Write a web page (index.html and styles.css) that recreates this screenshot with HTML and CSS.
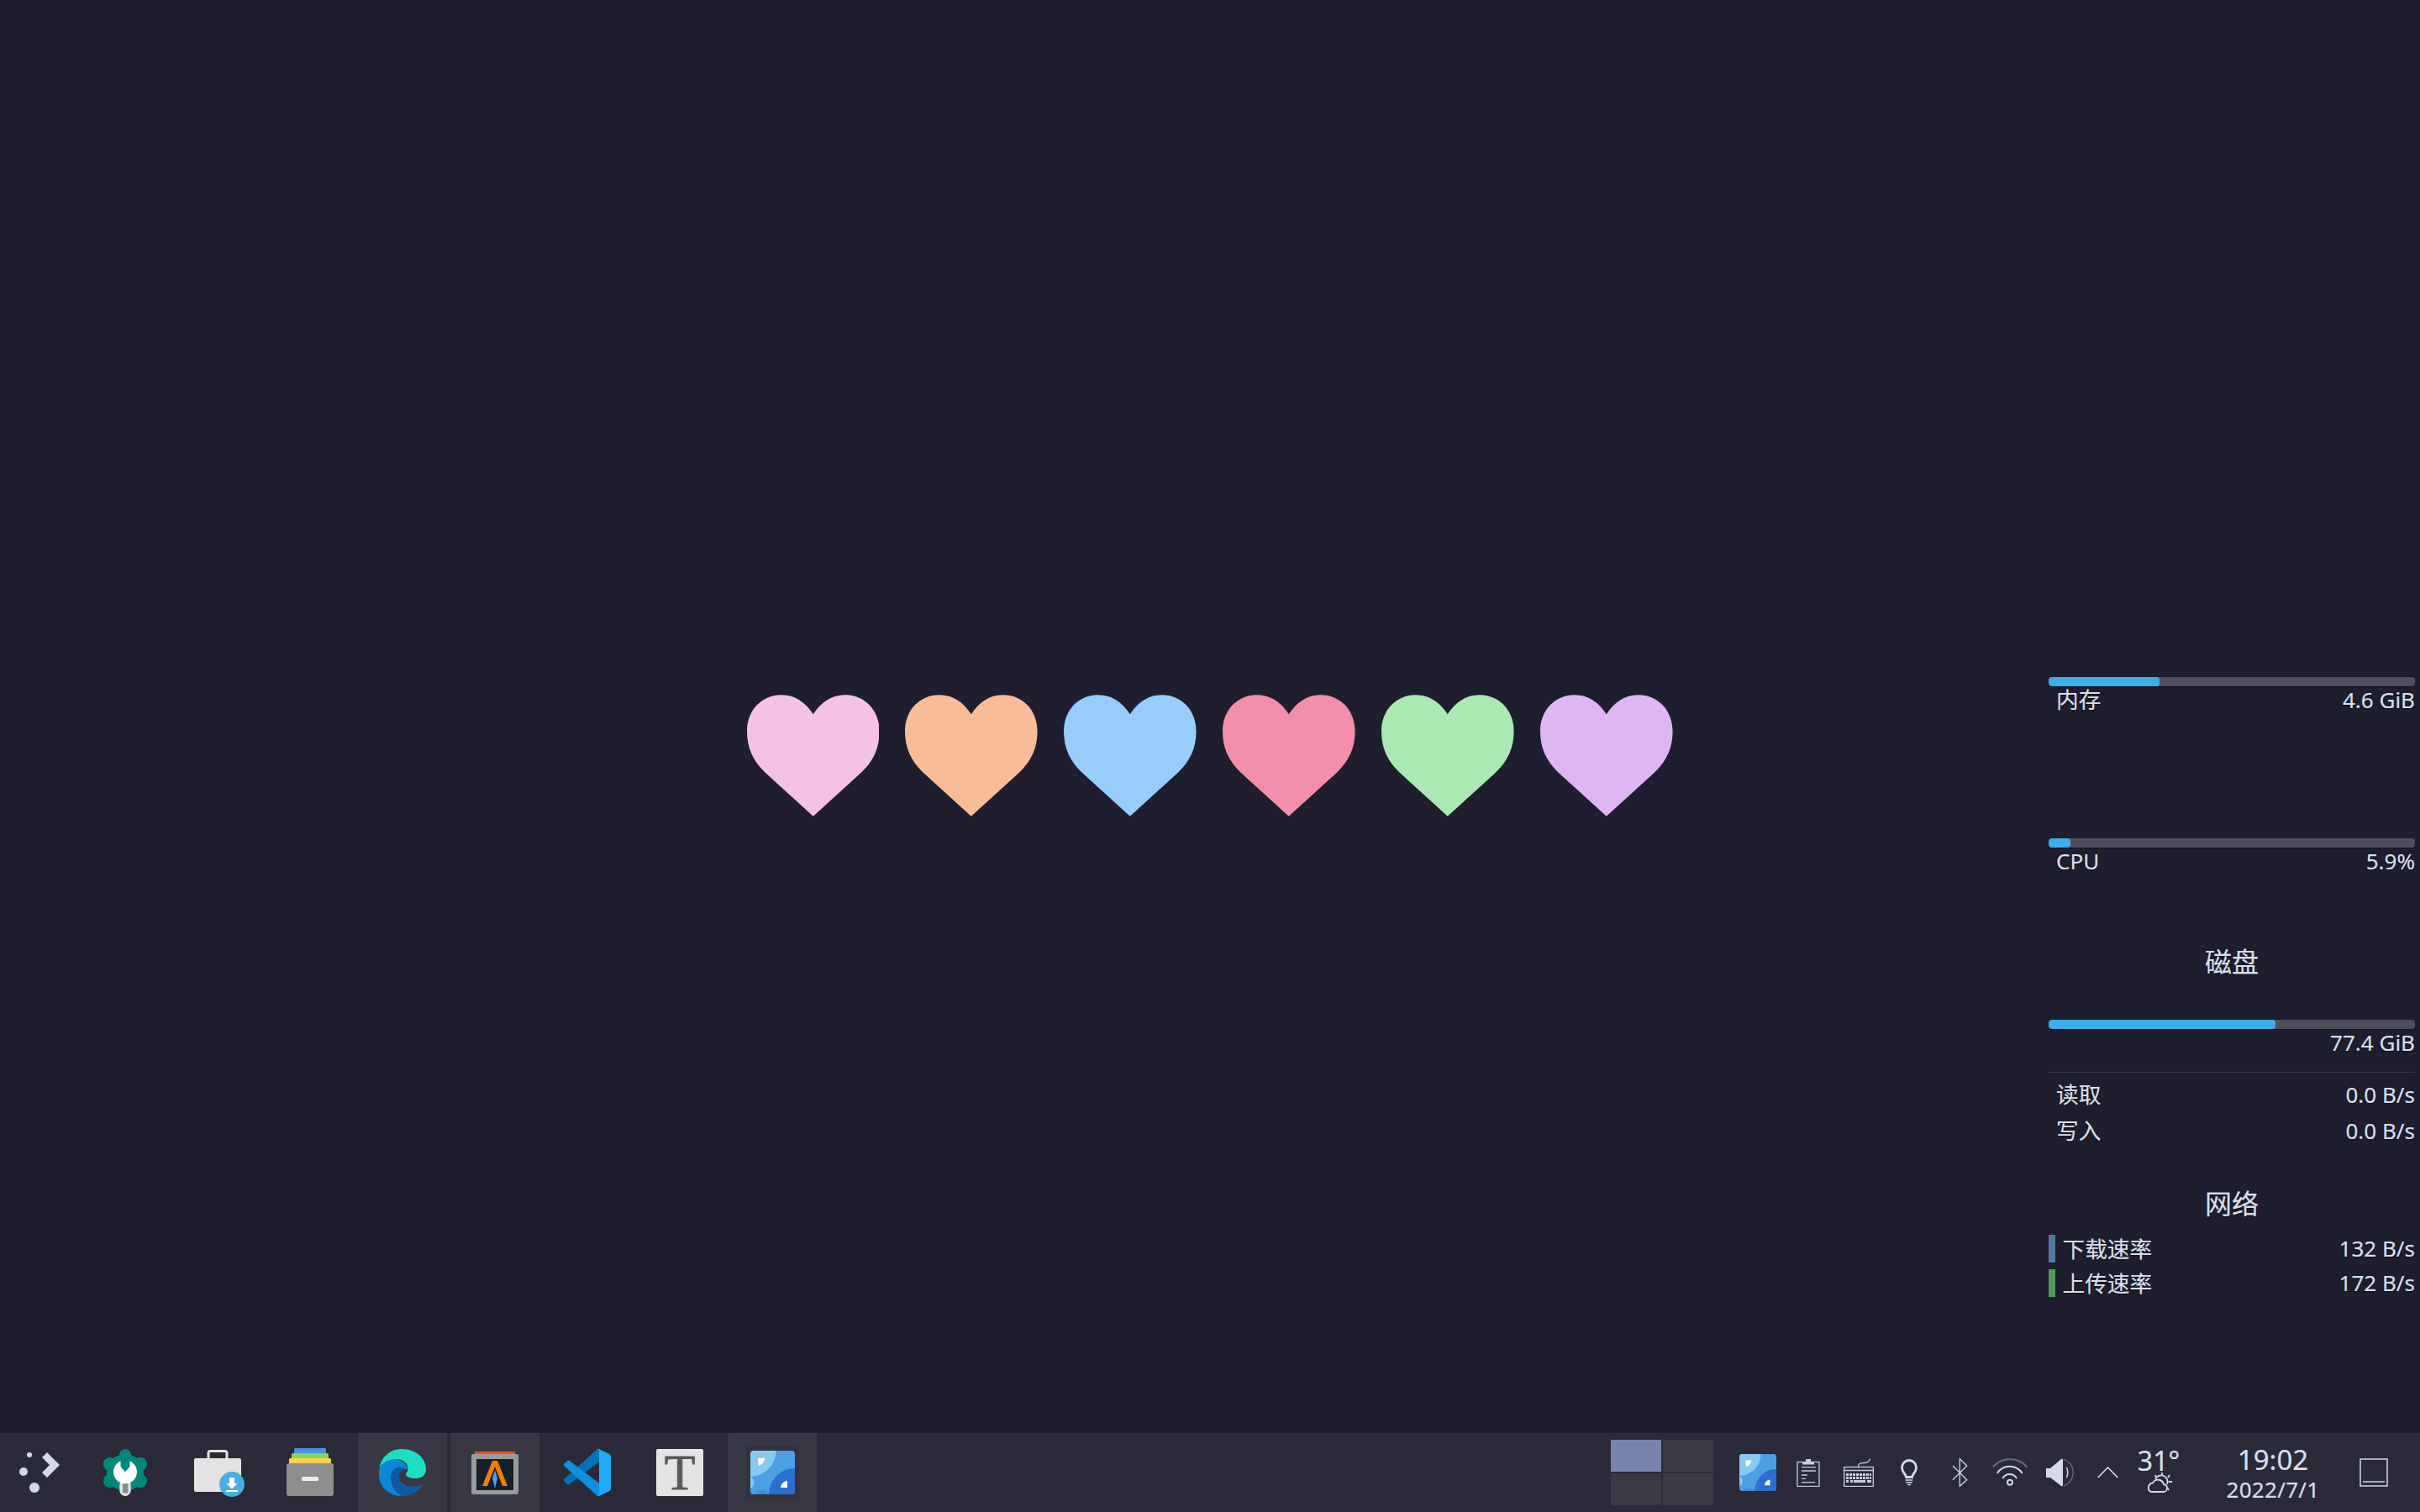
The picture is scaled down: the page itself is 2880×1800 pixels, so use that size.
FILE: index.html
```html
<!DOCTYPE html>
<html lang="zh-CN">
<head>
<meta charset="utf-8">
<title>Desktop</title>
<link rel="stylesheet" href="styles.css">
</head>
<body>
<div class="screen">
  <main class="desktop">
    <section class="hearts">
      <svg class="heart heart-pink" viewBox="0 0 158 145"><use href="#heart-shape"/></svg>
      <svg class="heart heart-peach" viewBox="0 0 158 145"><use href="#heart-shape"/></svg>
      <svg class="heart heart-blue" viewBox="0 0 158 145"><use href="#heart-shape"/></svg>
      <svg class="heart heart-red" viewBox="0 0 158 145"><use href="#heart-shape"/></svg>
      <svg class="heart heart-green" viewBox="0 0 158 145"><use href="#heart-shape"/></svg>
      <svg class="heart heart-mauve" viewBox="0 0 158 145"><use href="#heart-shape"/></svg>
    </section>
    <aside class="monitor">
      <div class="bar"><div class="fill" style="width:30.3%"></div></div>
      <div class="row"><span>内存</span><span class="val">4.6 GiB</span></div>
      <div class="bar bar-cpu"><div class="fill" style="width:6%"></div></div>
      <div class="row"><span class="val">CPU</span><span class="val">5.9%</span></div>
      <h2 class="heading heading-disk">磁盘</h2>
      <div class="bar bar-disk"><div class="fill" style="width:62%"></div></div>
      <div class="row"><span></span><span class="val">77.4 GiB</span></div>
      <div class="divider"></div>
      <div class="row row-read"><span>读取</span><span class="val">0.0 B/s</span></div>
      <div class="row row-write"><span>写入</span><span class="val">0.0 B/s</span></div>
      <h2 class="heading heading-net">网络</h2>
      <div class="net-row net-down"><i class="swatch swatch-down"></i><span class="net-label">下载速率</span><span class="val">132 B/s</span></div>
      <div class="net-row net-up"><i class="swatch swatch-up"></i><span class="net-label">上传速率</span><span class="val">172 B/s</span></div>
    </aside>
  </main>
  <footer class="panel">
    <div class="launcher">
      <svg class="ico-start" viewBox="0 0 48 48"><g fill="#d6dae4"><circle cx="12" cy="3" r="3"/><circle cx="5" cy="23" r="5"/><circle cx="18" cy="42" r="6"/><path d="M33 0 48 15 33 30 27 24 36 15 27 6Z"/></g></svg>
    </div>
    <nav class="tasks">
      <div class="task"><svg class="ico" viewBox="0 0 56 56"><g fill="#00897b"><circle cx="28" cy="28" r="22"/><circle cx="28" cy="7" r="7"/><circle cx="10" cy="18" r="8"/><circle cx="46" cy="18" r="8"/><circle cx="10" cy="38" r="8"/><circle cx="46" cy="38" r="8"/></g><rect x="21.300" y="36" width="13.400" height="20" rx="6.700" fill="#e4e4e4"/><rect x="25" y="41" width="6.500" height="11.500" rx="1" fill="#8a8a8a"/><circle cx="28" cy="27.300" r="14" fill="#fff"/><path d="M22.500 8H33.500V21L28 27.300 22.500 21Z" fill="#00897b"/></svg></div>
      <div class="task"><svg class="ico" viewBox="0 0 56 56"><path d="M17 11V5Q17 2.500 19.500 2.500H36.500Q39 2.500 39 5V11" fill="none" stroke="#e3e3e3" stroke-width="3"/><rect y="11" width="56" height="40" rx="2" fill="#e3e3e3"/><circle cx="45" cy="42" r="15" fill="#4aaee2"/><path d="M42 34H48V41H51.500L45 47.500 38.500 41H42ZM38 49H52V51H38Z" fill="#fff"/></svg></div>
      <div class="task"><svg class="ico" viewBox="0 0 56 56"><rect x="9" y="-1" width="38" height="8" rx="1.500" fill="#4a90e2"/><rect x="6" y="5" width="44" height="8" rx="1.500" fill="#7ed957"/><rect x="3" y="11" width="50" height="8" rx="1.500" fill="#ffce4f"/><rect y="17" width="56" height="39" rx="3" fill="#8e8e8e"/><rect x="18" y="33" width="20" height="5" rx="1.500" fill="#ececec"/></svg></div>
      <div class="task task-on"><svg class="ico" viewBox="0 0 56 56"><path d="M.7 22C0 25 0 28 0 31 0 45 12 56 27 56 38 56 47 50 52 42 47 45 40 46 34 44 27 42 23 38 24 31 25 27 27 25 32 24 34 24 34 23 34 22.500 31 16 25 12 19 12 11 12 4 16 .7 22Z" fill="#0c86d8"/><path d="M22 22C16 25 13 30 14 36 15 45 20 52 27 56 38 56 47 50 52 42 47 45 40 46 34 44 27 42 23 38 24 31 25 27 28 25 32 24 29 22 25 21 22 22Z" fill="#11589f"/><path d="M.7 22C3 9 14 0 27 0 44 0 56 11 56 24 56 31 51 35 44 35 38 35 33 33 32 31 31.500 29 34 28 34.500 24 35 18 29 12 21 12 12 12 4 16 .7 22Z" fill="#1bdfc0"/></svg></div>
      <div class="task task-on"><svg class="ico" viewBox="0 0 56 56"><rect x="4" y="3" width="48" height="5" fill="#f4511e"/><rect y="6" width="56" height="48" rx="2" fill="#9a9a9a"/><rect x="6" y="12" width="44" height="37" fill="#14212a"/><path d="M13 44 25 14H31L43 44H37L28 21 19 44Z" fill="#f57c00"/><path d="M28 25 31 35 28 47 25 35Z" fill="#4f9bff"/></svg></div>
      <div class="task"><svg class="ico" viewBox="0 0 100 100"><path d="M96.460 10.800 75.860.87a6.220 6.220 0 0 0-7.100 1.210L1.300 63.540a4.160 4.160 0 0 0 0 6.160l5.510 5a4.160 4.160 0 0 0 5.320.24L93.360 13.370a4.130 4.130 0 0 1 6.640 3.290v-.24a6.250 6.250 0 0 0-3.540-5.620z" fill="#0273b8"/><path d="M96.460 89.200 75.860 99.130a6.220 6.220 0 0 1-7.100-1.210L1.300 36.460a4.160 4.160 0 0 1 0-6.160l5.510-5a4.160 4.160 0 0 1 5.320-.24l81.230 61.570A4.130 4.130 0 0 0 100 83.340v.24a6.250 6.250 0 0 1-3.540 5.620z" fill="#0e8fe0"/><path d="M75.860 99.130a6.220 6.220 0 0 1-7.100-1.210c2.300 2.300 6.240.67 6.240-2.580V4.660c0-3.250-3.940-4.880-6.240-2.580a6.220 6.220 0 0 1 7.100-1.210l20.600 9.900A6.250 6.250 0 0 1 100 16.390v67.220a6.250 6.250 0 0 1-3.540 5.620z" fill="#1fabf8"/></svg></div>
      <div class="task"><div class="typora">T</div></div>
      <div class="task task-on"><div class="app-tile"><svg class="ico-app" viewBox="0 0 53 52"><use href="#app-shape"/></svg></div></div>
    </nav>
    <div class="spacer"></div>
    <div class="pager"><i class="desk desk-on"></i><i class="desk"></i><i class="desk"></i><i class="desk"></i></div>
    <div class="tray">
      <div class="cell"><svg class="ico-tray-app" viewBox="0 0 53 52" preserveAspectRatio="none"><use href="#app-shape"/></svg></div>
      <div class="cell"><svg class="t28" viewBox="0 0 28 34"><g fill="none" stroke="#c9cdd7" stroke-width="1.300"><rect x="1" y="4.500" width="26" height="29"/><path d="M6 10.700H23M6 15H23M6 20H13M6 24.300H11M6 28.700H22"/></g><path d="M7 7.500V4H11V1H17V4H21V7.500Z" fill="#c9cdd7"/></svg></div>
      <div class="cell"><svg class="t36" viewBox="0 0 36 34"><g fill="none" stroke="#c9cdd7" stroke-width="1.300"><rect x=".7" y="10.500" width="34.600" height="23"/><path d="M.7 14.500H35.300M17.500 10C17.500 5.500 21 6 25 5.500 29 5 31 4 31 .5"/></g><g fill="#c9cdd7"><rect x="3" y="18" width="30" height="3"/><rect x="3" y="22" width="30" height="3"/><rect x="3" y="26" width="3" height="3"/><rect x="8" y="26" width="3" height="3"/><rect x="12" y="26" width="14" height="3"/><rect x="28" y="26" width="5" height="3"/></g><g fill="#2a2a38"><rect x="6" y="18" width="1" height="7"/><rect x="10" y="18" width="1" height="7"/><rect x="14" y="18" width="1" height="7"/><rect x="18" y="18" width="1" height="7"/><rect x="22" y="18" width="1" height="7"/><rect x="26" y="18" width="1" height="7"/><rect x="30" y="18" width="1" height="7"/></g></svg></div>
      <div class="cell"><svg class="t20" viewBox="0 0 20 34"><path d="M6.500 22.500C6.500 18.500 1.500 18 1.500 11A8.500 8.500 0 0 1 18.500 11C18.500 18 13.500 18.500 13.500 22.500Z" fill="none" stroke="#d6dae4" stroke-width="2.800"/><path d="M5.500 26H14.500M6.300 28.700H13.700M8 31.500H12" stroke="#d6dae4" stroke-width="1.600"/></svg></div>
      <div class="cell"><svg class="t20" viewBox="0 0 20 34"><path d="M2 25.700 18.700 9 10.300 .7V33.300L18.700 25.700 2 9" fill="none" stroke="#c9cdd7" stroke-width="1.400"/></svg></div>
      <div class="cell"><svg class="t42" viewBox="0 0 42 34"><path d="M.7 10.500A27 27 0 0 1 41.300 10.500" fill="none" stroke="#6b6b75" stroke-width="2"/><path d="M5.700 18A17.700 17.700 0 0 1 35.700 18M12.300 24A9.400 9.400 0 0 1 29 24" fill="none" stroke="#d6dae4" stroke-width="2"/><circle cx="21" cy="28.700" r="3" fill="none" stroke="#d6dae4" stroke-width="2"/></svg></div>
      <div class="cell"><svg class="t34" viewBox="0 0 34 34"><path d="M0 12H5L18 1Q20 0 20 2V32Q20 34 18 33L5 23H0Z" fill="#d6dae4"/><path d="M24.500 11Q27 17 24.500 23" fill="none" stroke="#d6dae4" stroke-width="1.500"/><path d="M21 1A17 17 0 0 1 21 33" fill="none" stroke="#6e6e78" stroke-width="1.300"/></svg></div>
      <div class="cell cell-chev"><svg class="t25" viewBox="0 0 25 14"><path d="M.7 13 12.500 1 24.300 13" fill="none" stroke="#d6dae4" stroke-width="1.600"/></svg></div>
    </div>
    <div class="weather">
      <div class="temp">31°</div>
      <svg class="t31" viewBox="0 0 31 24"><path d="M6 23H20A4.500 4.500 0 0 0 21 14 7 7 0 0 0 8 12.500 5.500 5.500 0 0 0 6 23Z" fill="none" stroke="#d6dae4" stroke-width="1.800"/><path d="M11 8A7.500 7.500 0 0 1 25 14" fill="none" stroke="#d6dae4" stroke-width="1.800"/><path d="M19 0V3.500M10.700 3 12 5.300M28 3 26 6M31 11H27M25.500 18.500 27 21" stroke="#d6dae4" stroke-width="1.800"/></svg>
    </div>
    <div class="clock"><div class="time">19:02</div><div class="date">2022/7/1</div></div>
    <svg class="show-desktop" viewBox="0 0 34 34"><rect x="1" y="1" width="32" height="32" fill="none" stroke="#c9cdd7" stroke-width="1.600"/><path d="M4 28H30" stroke="#c9cdd7" stroke-width="1.600"/></svg>
  </footer>
</div>
<svg class="defs" width="0" height="0">
  <defs>
    <path id="heart-shape" d="M79 145 22 93C6 78 0 62 0 43 0 18 18 0 41 0 57 0 70 9 79 23 88 9 101 0 117 0 140 0 158 18 158 43 158 62 152 78 136 93Z"/>
    <clipPath id="app-clip"><rect width="53" height="52" rx="4"/></clipPath>
    <g id="app-shape" clip-path="url(#app-clip)">
      <rect width="53" height="52" fill="#4c9fe3"/>
      <circle cx="0" cy="0" r="30.700" fill="#86c9f1"/>
      <circle cx="-3" cy="38" r="7.500" fill="#86c9f1"/>
      <circle cx="13.300" cy="56" r="9" fill="#3f8bd6"/>
      <circle cx="53" cy="52" r="31" fill="#2b6fd1"/>
      <path d="M9 9 17.300 8.500C17 13 14 17 9.500 17.700Z" fill="#fff"/>
      <path d="M44 36V44H36C36.500 39.500 39.500 36.500 44 36Z" fill="#fff"/>
    </g>
  </defs>
</svg>
</body>
</html>
```
FILE: styles.css
```css
* { box-sizing: border-box; }
html, body { margin: 0; height: 100%; }
body {
  background: #1e1e2e;
  color: #d9dfea;
  font-family: "Noto Sans", "Noto Sans CJK SC", sans-serif;
  overflow: hidden;
  -webkit-text-stroke: .2px #d9dfea;
}
.screen { display: flex; flex-direction: column; height: 1800px; }
.desktop { position: relative; flex: 1; }
.defs { position: absolute; }

.hearts {
  position: absolute;
  left: 888.5px;
  top: 827px;
  display: flex;
  gap: 31.4px;
}
.heart { width: 157.6px; height: 145px; display: block; }
.heart-pink { fill: #f5c2e7; }
.heart-peach { fill: #f8bd96; }
.heart-blue { fill: #96cdfb; }
.heart-red { fill: #f28fad; }
.heart-green { fill: #abe9b3; }
.heart-mauve { fill: #ddb6f2; }

.monitor {
  position: absolute;
  left: 2438px;
  top: 806px;
  width: 436px;
  font-size: 26.67px;
  text-shadow: 0 1px 2px rgba(0, 0, 0, .55);
}
.val { font-size: 26px; }
.bar { height: 11px; background: #4f4f5b; border-radius: 4px; overflow: hidden; box-shadow: 0 1px 1px rgba(0, 0, 0, .4); }
.fill { height: 100%; background: #3daee9; border-radius: 4px; }
.bar-cpu { margin-top: 149px; }
.bar-disk { margin-top: 47px; }
.row {
  display: flex;
  justify-content: space-between;
  height: 32px;
  line-height: 32px;
  padding-left: 9px;
}
.row-read { margin-top: 10px; }
.row-write { margin-top: 11px; }
.divider { height: 1px; margin-top: 19px; background: #3a3a48; }
.heading {
  margin: 0;
  height: 44px;
  line-height: 44px;
  text-align: center;
  font-size: 32px;
  font-weight: 400;
}
.heading-disk { margin-top: 82px; }
.heading-net { margin-top: 49px; }
.net-row { display: flex; align-items: center; height: 33px; line-height: 33px; }
.net-down { margin-top: 15px; }
.net-up { margin-top: 8px; }
.swatch { width: 8px; height: 33px; margin-right: 8.5px; }
.swatch-down { background: #4f7a9c; }
.swatch-up { background: #519a5c; }
.net-label { flex: 1; }

.panel {
  display: flex;
  align-items: center;
  height: 94px;
  background: #2a2a38;
  padding-right: 38px;
}
.launcher { width: 94px; height: 94px; display: flex; align-items: center; justify-content: center; }
.ico-start { width: 48px; height: 48px; display: block; }
.tasks { display: flex; gap: 4px; margin-left: 2px; height: 94px; }
.task { width: 106px; height: 94px; display: flex; align-items: center; justify-content: center; }
.task-on { background: #383844; }
.ico { width: 56px; height: 56px; display: block; overflow: visible; }
.typora {
  width: 56px;
  height: 56px;
  border-radius: 2px;
  background: #e4e4e4;
  color: #5a5a5a;
  -webkit-text-stroke: .8px #5a5a5a;
  font-family: "Liberation Serif", serif;
  font-size: 60px;
  line-height: 56px;
  text-align: center;
}
.app-tile { width: 63px; height: 64px; background: #33333f; display: flex; align-items: center; justify-content: center; }
.ico-app { width: 53px; height: 52px; display: block; }
.spacer { flex: 1; }
.pager {
  display: grid;
  grid-template-columns: 60px 60px;
  grid-template-rows: 38px 38px;
  gap: 2px;
}
.desk { background: #3a3a46; }
.desk-on { background: #7884ab; }
.tray { display: flex; margin-left: 23px; }
.cell { width: 60px; height: 94px; display: flex; align-items: center; justify-content: center; }
.cell-chev { width: 52px; }
.ico-tray-app { width: 44px; height: 44px; display: block; }
.t28 { width: 28px; height: 34px; display: block; }
.t36 { width: 36px; height: 34px; display: block; }
.t20 { width: 20px; height: 34px; display: block; }
.t42 { width: 42px; height: 34px; display: block; }
.t34 { width: 34px; height: 34px; display: block; }
.t25 { width: 25px; height: 14px; display: block; }
.t31 { width: 31px; height: 24px; display: block; }
.weather { align-self: flex-start; margin-top: 16px; width: 70px; display: flex; flex-direction: column; align-items: center; }
.temp { font-size: 32px; line-height: 33px; height: 31px; }
.clock { width: 202px; text-align: center; padding-top: 1px; }
.time { font-size: 33px; line-height: 38px; }
.date { font-size: 26px; letter-spacing: .3px; line-height: 32px; }
.show-desktop { width: 34px; height: 34px; margin-left: 2px; display: block; }
```
